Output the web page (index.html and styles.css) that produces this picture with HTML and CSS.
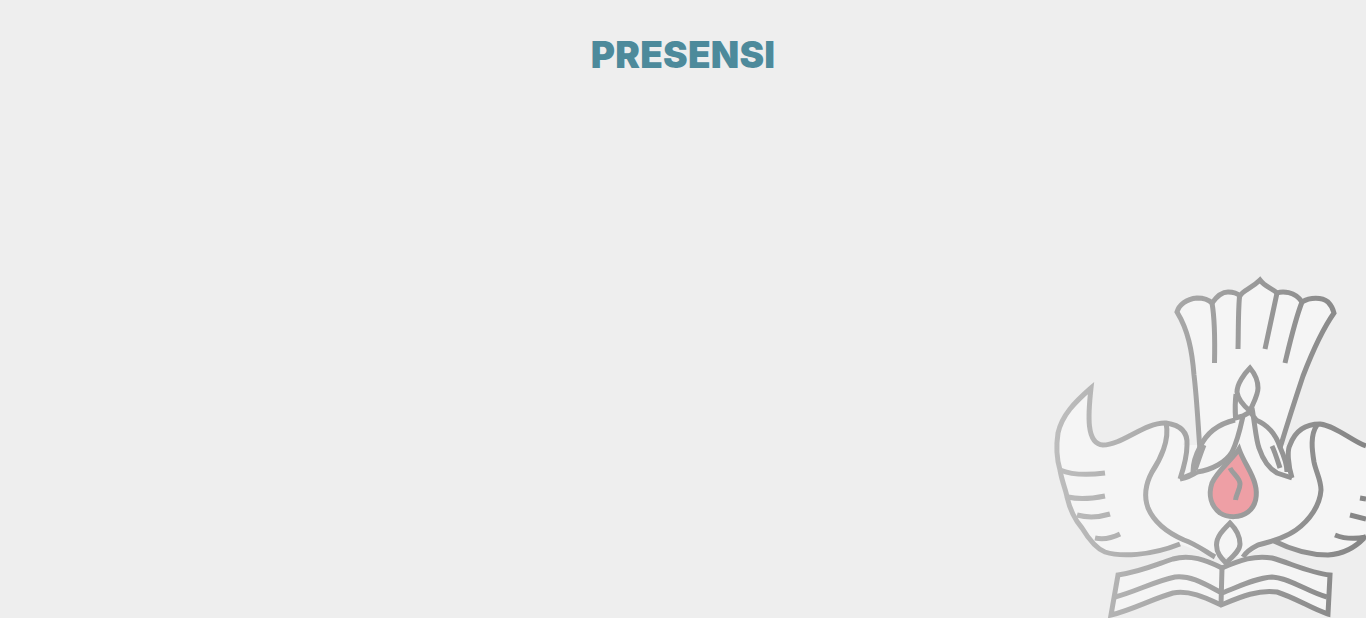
FILE: index.html
```html
<!DOCTYPE html>
<html lang="id">
<head>
<meta charset="utf-8">
<title>Presensi</title>
<link rel="stylesheet" href="styles.css">
</head>
<body>
<header class="header"><h1 class="title">PRESENSI</h1></header>
<svg class="emblem" viewBox="1050 270 316 348" aria-hidden="true">
  <defs>
    <linearGradient id="line" gradientUnits="userSpaceOnUse" x1="1055" y1="0" x2="1366" y2="0">
      <stop offset="0" stop-color="#bdbdbd"/>
      <stop offset="1" stop-color="#858585"/>
    </linearGradient>
  </defs>
  <g class="shape">
    <path d="M1177 312C1179 305 1186 299 1197 298C1204 298 1209 300 1212 303C1217 296 1222 292 1228 292C1233 292 1237 293 1240 296C1243 290 1251 289 1260 280C1265 287 1272 288 1277 293C1282 291 1295 291 1302 302C1310 297 1322 297 1328 302C1331 305 1333 309 1334 313C1322 330 1313 350 1303 376C1295 400 1287 425 1280 448L1200 448C1198 425 1197 400 1194 375C1192 350 1188 330 1177 312Z"/>
    <path d="M1091 388C1075 402 1062 415 1058 433C1056 446 1057 460 1060 470C1062 482 1066 490 1067 497C1070 510 1075 520 1082 528C1088 538 1095 548 1105 552C1120 557 1150 556 1180 544L1215 557L1243 557L1273 541C1290 549 1310 555 1328 555C1345 554 1358 545 1366 536L1366 446C1352 441 1336 426 1320 424C1310 424 1300 428 1290 445L1183 445C1188 432 1180 425 1166 423C1145 422 1122 445 1103 445C1086 444 1088 415 1091 388Z"/>
    <path d="M1118 575C1140 572 1155 565 1173 559C1190 554 1206 560 1222 568C1240 560 1255 555 1272 558C1290 563 1310 573 1330 575L1328 614C1312 609 1296 598 1277 592C1258 589 1238 598 1221 605C1206 598 1190 590 1173 593C1152 599 1132 610 1111 615Z"/>
  </g>
  <g class="lines">
    <path d="M1200 450C1198 425 1197 400 1194 375C1192 350 1188 330 1177 312C1179 305 1186 299 1197 298C1204 298 1209 300 1212 303C1217 296 1222 292 1228 292C1233 292 1237 293 1240 296C1243 290 1251 289 1260 280C1265 287 1272 288 1277 293C1282 291 1295 291 1302 302C1310 297 1322 297 1328 302C1331 305 1333 309 1334 313C1322 330 1313 350 1303 376C1295 400 1287 425 1280 448"/>
    <path d="M1212 303C1215 320 1215 340 1214.500 363M1239.500 296C1238 315 1238.500 330 1238 349M1277 293C1273 312 1269 330 1265 349M1302 302C1295 320 1290 342 1285 363"/>
    <path d="M1250 368C1255 374 1258 381 1258 388C1258 396 1252 405 1250 411C1244 406 1238 399 1237 392C1237 384 1244 374 1250 368Z"/>
    <path d="M1236 394C1235 402 1235 410 1235.500 418L1243 416L1250 412C1255 418 1256 420 1256 420M1243 416C1241 425 1238 440 1232 452C1226 462 1212 470 1197 472M1252 408C1255 425 1256 440 1259 448C1263 460 1268 468 1277 473L1292 478"/>
    <path d="M1235 420C1218 424 1206 434 1200 447C1195 456 1193 464 1193 472M1256 420C1268 425 1276 435 1280 447C1284 456 1287 465 1287 472"/>
    <path d="M1204 445C1201 452 1198 462 1195 470M1272 446C1275 452 1278 462 1280 468"/>
    <path d="M1180 479L1197 472C1190 477 1185 478 1180 479ZM1180 479C1184 467 1187 456 1187 445C1188 432 1180 425 1166 423C1145 422 1122 445 1103 445C1086 444 1088 415 1091 388C1075 402 1062 415 1058 433C1056 446 1057 460 1060 470C1062 482 1066 490 1067 497C1070 510 1075 520 1082 528C1088 538 1095 548 1105 552C1120 557 1150 556 1180 544"/>
    <path d="M1060 470C1072 475 1090 475 1105 473M1068 497C1080 500 1095 498 1105 496M1077 515C1088 518 1100 517 1110 514M1095 538C1104 540 1112 538 1120 534"/>
    <path d="M1166 423C1170 440 1160 460 1152 472C1145 485 1144 497 1148 508C1154 522 1168 533 1184 540C1196 544 1206 552 1215 557"/>
    <path d="M1292 478C1288 465 1287 450 1290 445C1295 431 1305 424 1320 424C1336 426 1352 441 1366 446"/>
    <path d="M1317 425C1310 435 1312 450 1314 462C1316 472 1321 480 1321 490C1320 505 1310 520 1296 530C1285 538 1270 542 1258 545C1252 548 1246 552 1243 557"/>
    <path d="M1274 541C1290 549 1310 555 1328 555C1345 554 1358 545 1366 536M1335 535C1345 539 1356 539 1366 537M1350 515L1366 519M1360 498L1366 499"/>
    <path d="M1230 523C1236 529 1240 536 1240 544C1240 551 1232 557 1226 563C1221 558 1216.500 553 1216.500 545C1216.500 536 1224 529 1230 523Z"/>
    <path d="M1118 575C1140 572 1155 565 1173 559C1190 554 1206 560 1222 568C1240 560 1255 555 1272 558C1290 563 1310 573 1330 575L1328 614C1312 609 1296 598 1277 592C1258 589 1238 598 1221 605C1206 598 1190 590 1173 593C1152 599 1132 610 1111 615Z"/>
    <path d="M1115 597C1135 592 1155 581 1175 577C1192 575 1208 586 1222 593C1238 587 1255 578 1272 577C1290 578 1308 592 1327 597M1222 568L1221 605"/>
  </g>
  <path class="flame" d="M1239 449C1232 460 1218 470 1212 483C1208 495 1211 506 1220 513C1228 518 1240 518 1248 512C1256 506 1258 495 1255 484C1252 472 1244 463 1239 449Z"/>
  <path class="lines-inner" d="M1230 468C1233 474 1240 478 1240 484C1240 490 1236 494 1235.500 500"/>
</svg>
</body>
</html>
```
FILE: styles.css
```css
html, body {
  margin: 0;
  height: 100%;
  overflow: hidden;
  background: #eeeeee;
}

.header {
  padding-top: 32px;
  text-align: center;
}

.title {
  margin: 0;
  font-family: Inter, "Liberation Sans", sans-serif;
  font-size: 37px;
  line-height: 45px;
  font-weight: 900;
  letter-spacing: 0.2px;
  color: #4d8a9b;
}

.emblem {
  position: fixed;
  right: 0;
  bottom: 0;
  width: 316px;
  height: 348px;
  display: block;
}

.shape path {
  fill: #f5f5f5;
  stroke: none;
}

.lines path,
.flame,
.lines-inner {
  stroke: url(#line);
  stroke-width: 5px;
  stroke-linejoin: miter;
}

.lines path,
.lines-inner {
  fill: none;
}

.flame {
  fill: #ee9fa5;
}
```
